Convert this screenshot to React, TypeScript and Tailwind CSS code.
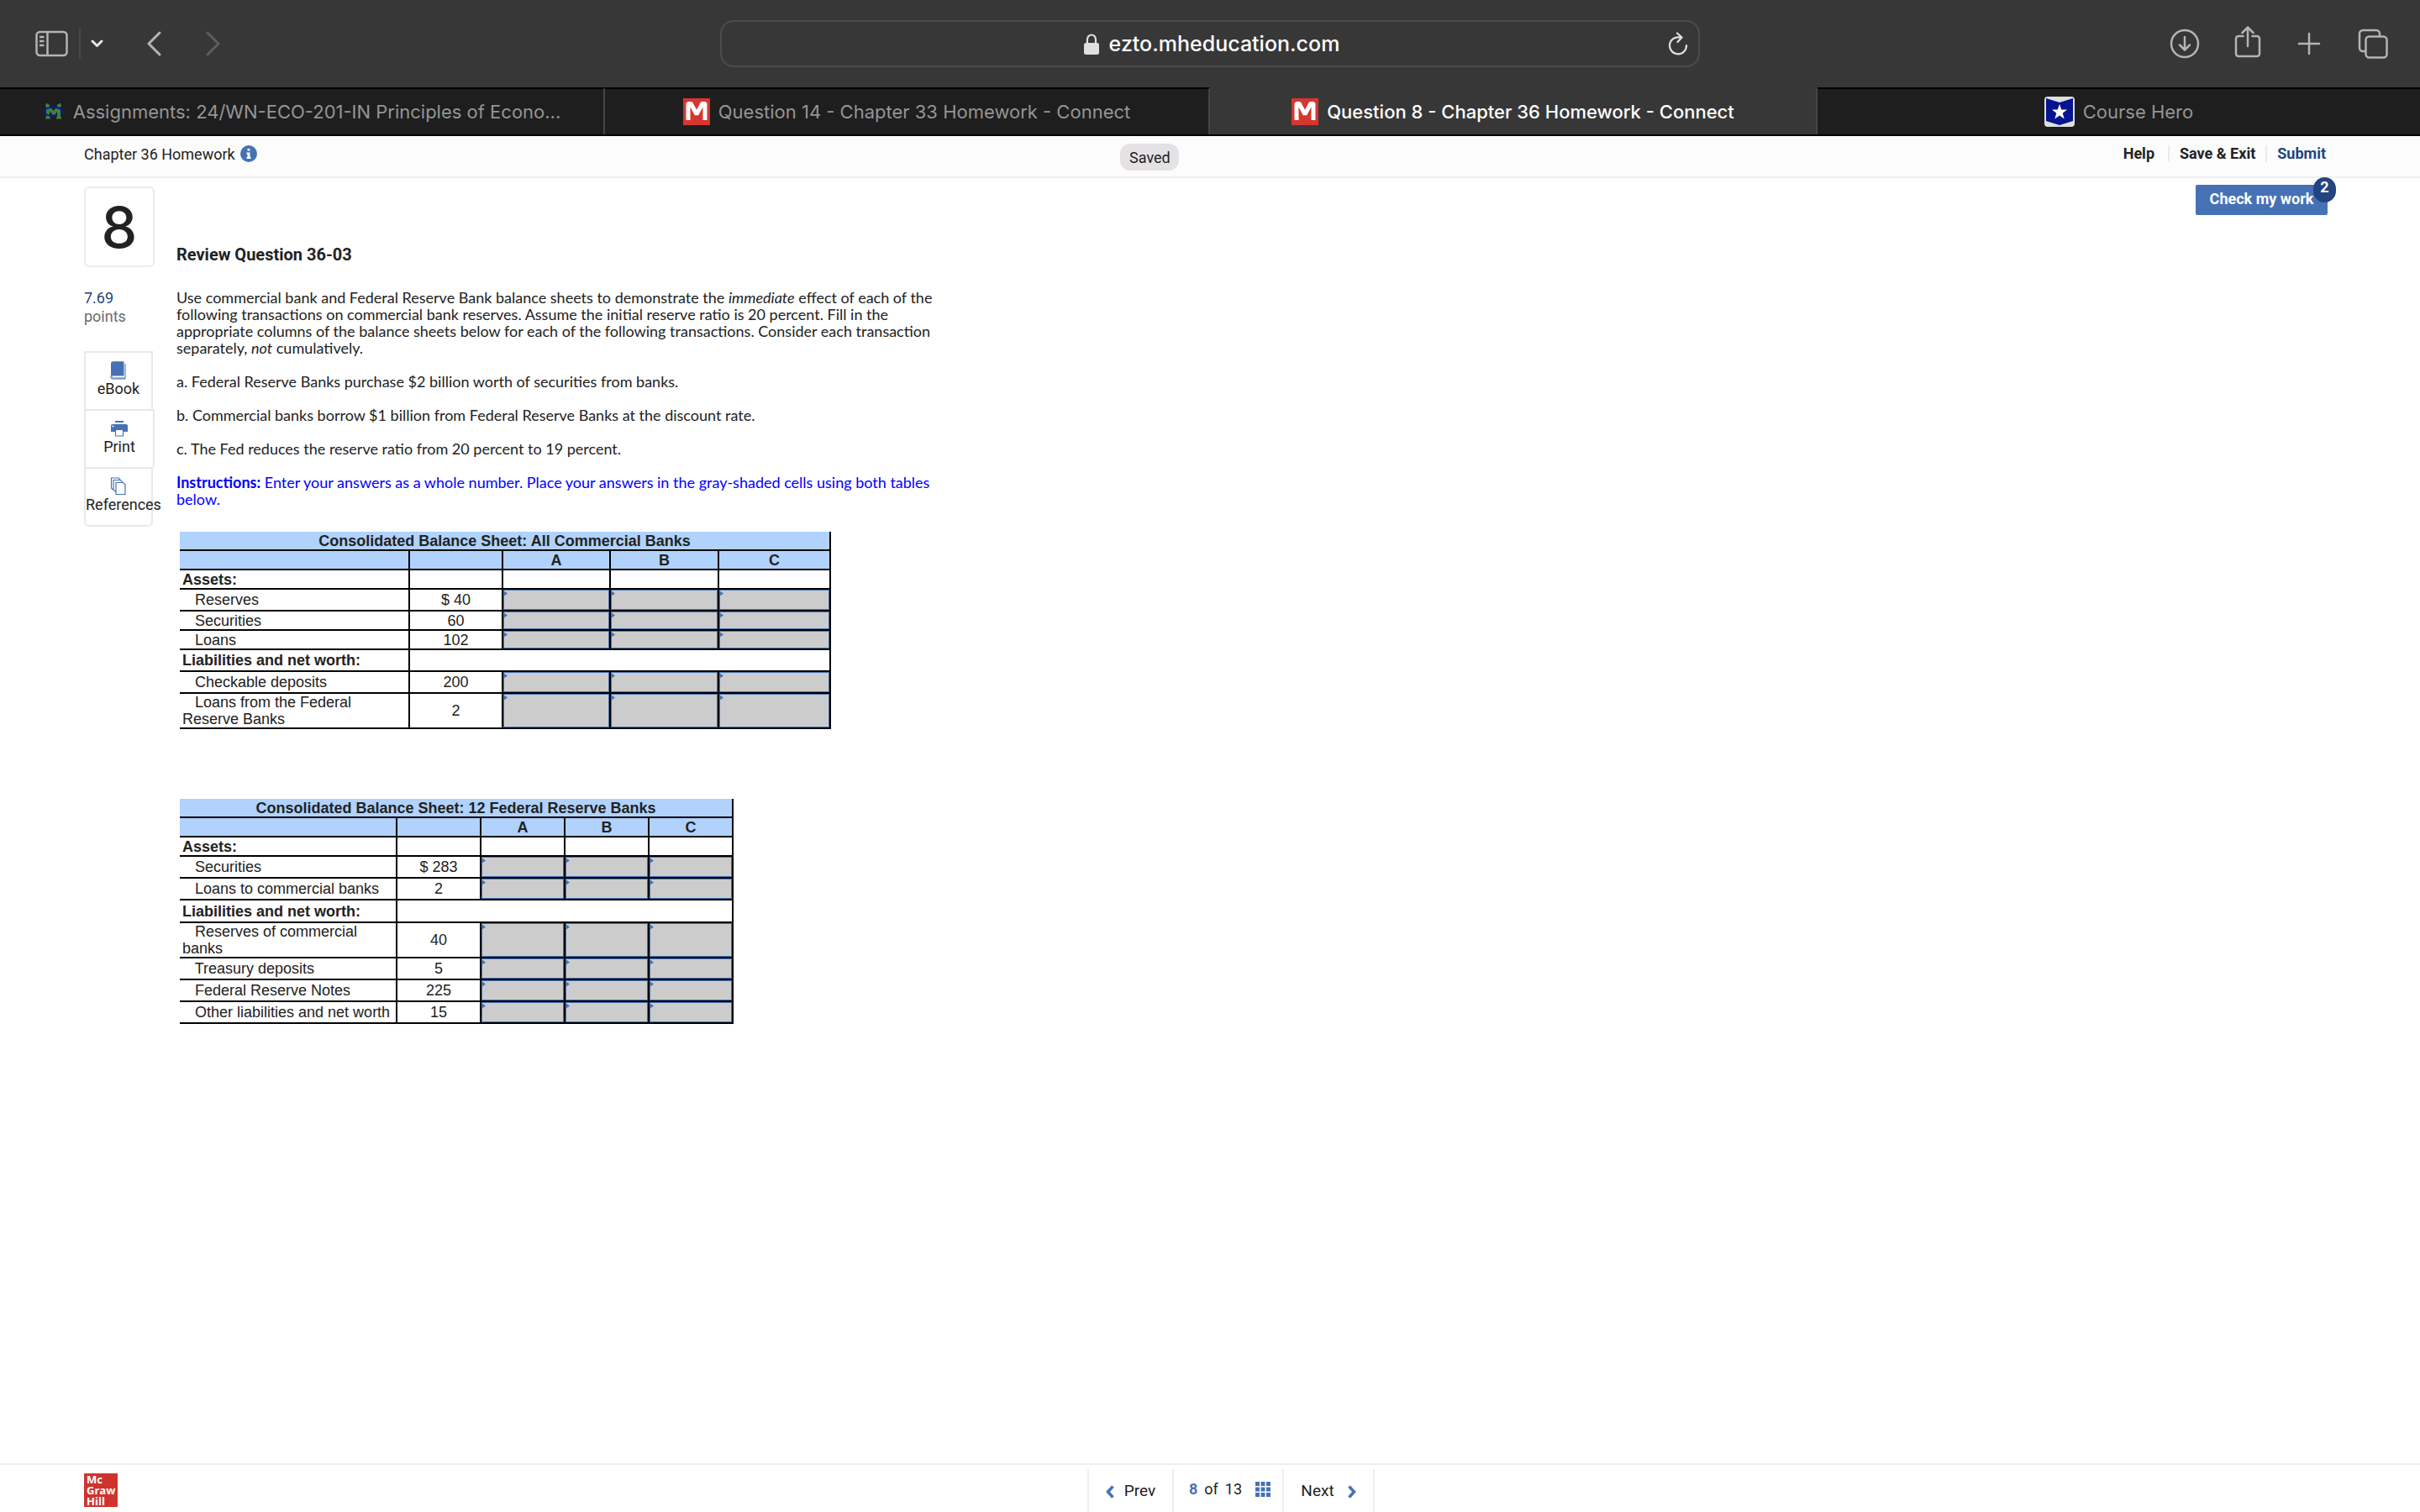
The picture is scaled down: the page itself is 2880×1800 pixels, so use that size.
import { ReactNode } from "react"

type Row = {
    label:string;
    value?:string;
    kind:"section" | "span" | "entry";
    height:string;
}

type Sheet = {
    title:string;
    widths:string[];
    rows:Row[];
}

const commercialBanks:Sheet = {
    title:"Consolidated Balance Sheet: All Commercial Banks",
    widths:["w-[274px]","w-[111px]","w-[128px]","w-[129px]","w-[133px]"],
    rows:[
        { label:"Assets:", kind:"section", height:"h-[23px]" },
        { label:"Reserves", value:"$ 40", kind:"entry", height:"h-[26px]" },
        { label:"Securities", value:"60", kind:"entry", height:"h-[23px]" },
        { label:"Loans", value:"102", kind:"entry", height:"h-[23px]" },
        { label:"Liabilities and net worth:", kind:"span", height:"h-[26px]" },
        { label:"Checkable deposits", value:"200", kind:"entry", height:"h-[26px]" },
        { label:"Loans from the Federal Reserve Banks", value:"2", kind:"entry", height:"h-[42px]" },
    ],
}

const reserveBanks:Sheet = {
    title:"Consolidated Balance Sheet: 12 Federal Reserve Banks",
    widths:["w-[259px]","w-[100px]","w-[100px]","w-[100px]","w-[100px]"],
    rows:[
        { label:"Assets:", kind:"section", height:"h-[23px]" },
        { label:"Securities", value:"$ 283", kind:"entry", height:"h-[26px]" },
        { label:"Loans to commercial banks", value:"2", kind:"entry", height:"h-[26px]" },
        { label:"Liabilities and net worth:", kind:"span", height:"h-[27px]" },
        { label:"Reserves of commercial banks", value:"40", kind:"entry", height:"h-[42px]" },
        { label:"Treasury deposits", value:"5", kind:"entry", height:"h-[26px]" },
        { label:"Federal Reserve Notes", value:"225", kind:"entry", height:"h-[26px]" },
        { label:"Other liabilities and net worth", value:"15", kind:"entry", height:"h-[26px]" },
    ],
}

const columns:string[] = ["A","B","C"];

const cell = "border-b-2 border-r-2 border-black";

const AnswerCell = ({ name, height }:{ name:string, height:string }) => (
    <td className={`relative p-0 ${cell} ${height}`}>
        <input
            type="text"
            aria-label={name}
            className="block h-full w-full border border-[#4672b5] bg-[#cccccc] px-1 text-center text-sm leading-4 outline-none"
        />
        <svg className="pointer-events-none absolute top-0 left-0" width="5" height="8" viewBox="0 0 5 8">
            <path d="M0 1L5 4.5L0 8Z" fill="#4672b5" />
        </svg>
    </td>
)

const BalanceSheet = ({ sheet }:{ sheet:Sheet }) => (
    <table className="ml-1 table-fixed border-separate border-spacing-0 font-['Liberation_Sans',Arial,sans-serif] text-[18px] leading-5">
        <colgroup>
            {sheet.widths.map((width,index)=>(
                <col key={index} className={width} />
            ))}
        </colgroup>
        <thead className="bg-[#b0d2fc]">
            <tr>
                <th colSpan={5} className={`h-[23px] p-0 ${cell}`}>{sheet.title}</th>
            </tr>
            <tr>
                <td className={`h-[23px] p-0 ${cell}`}></td>
                <td className={`p-0 ${cell}`}></td>
                {columns.map((column)=>(
                    <th key={column} scope="col" className={`p-0 ${cell}`}>{column}</th>
                ))}
            </tr>
        </thead>
        <tbody>
            {sheet.rows.map((row)=>(
                <tr key={row.label}>
                    <th
                        scope="row"
                        className={`py-0 pr-0 pl-[3px] text-left ${cell} ${row.height} ` + (row.kind === "entry" ? "font-normal" : "font-bold")}
                    >
                        {row.kind === "entry" ? "\u00a0\u00a0 " : ""}{row.label}
                    </th>
                    {row.kind === "span" && <td colSpan={4} className={`p-0 ${cell}`}></td>}
                    {row.kind !== "span" && <td className={`p-0 text-center ${cell}`}>{row.value}</td>}
                    {row.kind === "section" && columns.map((column)=>(
                        <td key={column} className={`p-0 ${cell}`}></td>
                    ))}
                    {row.kind === "entry" && columns.map((column)=>(
                        <AnswerCell key={column} name={`${row.label} ${column}`} height={row.height} />
                    ))}
                </tr>
            ))}
        </tbody>
    </table>
)

const RedMark = () => (
    <span className="flex size-8 shrink-0 items-center justify-center bg-[#d6362f]">
        <svg width="26" height="24" viewBox="0 0 26 24" aria-hidden="true">
            <path d="M3 22V2H6L13 15L20 2H23V22" fill="none" stroke="#fff" strokeWidth="5" strokeLinejoin="bevel" />
        </svg>
    </span>
)

const CollegeMark = () => (
    <svg width="26" height="20" viewBox="0 0 26 20" className="shrink-0" aria-hidden="true">
        <path d="M6 17V4L13 12L19 4V17" fill="none" stroke="#35863f" strokeWidth="4" />
        <path d="M3 2.500H8M17 2.500H22M3 17.500H9M16 17.500H22" stroke="#35863f" strokeWidth="2" />
        <path d="M21 6C14 3 2 5 1.500 10C1.500 15 14 16 17 13M16 5C21 6 25 9 24 13" fill="none" stroke="#1d1490" strokeWidth="2" />
    </svg>
)

const HeroMark = () => (
    <svg width="36" height="36" viewBox="0 0 36 36" className="shrink-0" aria-hidden="true">
        <rect width="36" height="36" rx="4" fill="#dedede" />
        <path d="M2 2L18 7L34 2V29L18 34L2 29Z" fill="#06148f" />
        <path d="M18 9L20.3 15.6H27L21.7 19.8L23.7 26.5L18 22.5L12.3 26.5L14.3 19.8L9 15.6H15.7Z" fill="#fff" />
    </svg>
)

const tabs:{ title:string, icon:ReactNode, active?:boolean }[] = [
    { title:"Assignments: 24/WN-ECO-201-IN Principles of Econo...", icon:<CollegeMark /> },
    { title:"Question 14 - Chapter 33 Homework - Connect", icon:<RedMark /> },
    { title:"Question 8 - Chapter 36 Homework - Connect", icon:<RedMark />, active:true },
    { title:"Course Hero", icon:<HeroMark /> },
];

const BrowserBar = () => (
    <div className="bg-[#373737] font-[Inter,sans-serif]">
        <div className="grid h-[104px] grid-cols-[25fr_34fr_25fr] items-center text-[#b4b4b4]">
            <div className="flex items-center pl-[42px]">
                <button aria-label="Sidebar">
                    <svg width="39" height="32" viewBox="0 0 39 32" fill="none" stroke="currentColor" strokeWidth="2.5">
                        <rect x="1.5" y="2" width="36" height="28" rx="4" />
                        <path d="M14.5 2V30M5 8H10.500M5 13H10.500M5 18H10.500" />
                    </svg>
                </button>
                <span className="ml-[13px] h-9 w-[2px] bg-[#4a4a4a]" />
                <button aria-label="Tab groups" className="ml-3 text-[#e6e6e6]">
                    <svg width="15" height="10" viewBox="0 0 15 10" fill="none" stroke="currentColor" strokeWidth="3" strokeLinecap="round" strokeLinejoin="round">
                        <path d="M2 2L7.500 7.500L13 2" />
                    </svg>
                </button>
                <button aria-label="Back" className="ml-[51px]">
                    <svg width="18" height="30" viewBox="0 0 18 30" fill="none" stroke="currentColor" strokeWidth="3" strokeLinecap="round" strokeLinejoin="round">
                        <path d="M16 2L3 15L16 28" />
                    </svg>
                </button>
                <button aria-label="Forward" className="ml-[53px] text-[#5e5e5e]">
                    <svg width="18" height="30" viewBox="0 0 18 30" fill="none" stroke="currentColor" strokeWidth="3" strokeLinecap="round" strokeLinejoin="round">
                        <path d="M2 2L15 15L2 28" />
                    </svg>
                </button>
            </div>
            <div className="flex h-14 items-center rounded-2xl border-2 border-[#4c4c4c] px-3 text-[#e0e0e0]">
                <label className="ml-7 flex flex-1 items-center justify-center gap-3 pt-[2px]">
                    <svg width="18" height="26" viewBox="0 0 18 26" aria-hidden="true">
                        <rect y="11" width="18" height="14" rx="2.500" fill="currentColor" />
                        <path d="M4 12V7A5 5.500 0 0 1 14 7V12" fill="none" stroke="currentColor" strokeWidth="2.200" />
                    </svg>
                    <input
                        aria-label="Address"
                        defaultValue="ezto.mheducation.com"
                        className="field-sizing-content text-[25px] font-medium text-white outline-none"
                    />
                </label>
                <button aria-label="Reload">
                    <svg width="24" height="28" viewBox="0 0 24 28" fill="none" stroke="currentColor" strokeWidth="2.200" strokeLinecap="round" strokeLinejoin="round">
                        <path d="M14 6.500A10 10 0 1 0 22 16M11 1.500L16.500 6.500L11.500 12" />
                    </svg>
                </button>
            </div>
            <div className="flex items-center justify-end pr-[38px]">
                <button aria-label="Downloads">
                    <svg width="36" height="36" viewBox="0 0 36 36" fill="none" stroke="currentColor" strokeWidth="2.500" strokeLinecap="round" strokeLinejoin="round">
                        <path d="M18 10V25M12 19.500L18 25.500L24 19.500" />
                        <circle cx="18" cy="18" r="16" />
                    </svg>
                </button>
                <button aria-label="Share" className="mb-1 ml-[41px]">
                    <svg width="32" height="38" viewBox="0 0 32 38" fill="none" stroke="currentColor" strokeWidth="2.500" strokeLinecap="round" strokeLinejoin="round">
                        <path d="M10.500 12H5A3 3 0 0 0 2 15V33A3 3 0 0 0 5 36H27A3 3 0 0 0 30 33V15A3 3 0 0 0 27 12H21.500M16 24V2M9.500 8L16 1.500L22.500 8" />
                    </svg>
                </button>
                <button aria-label="New tab" className="ml-[43px]">
                    <svg width="28" height="28" viewBox="0 0 28 28" fill="none" stroke="currentColor" strokeWidth="2.500" strokeLinecap="round">
                        <path d="M14 2V26M2 14H26" />
                    </svg>
                </button>
                <button aria-label="Show tabs" className="ml-11">
                    <svg width="36" height="36" viewBox="0 0 36 36" fill="none" stroke="currentColor" strokeWidth="2.500">
                        <path d="M9 27H6A4 4 0 0 1 2 23V6A4 4 0 0 1 6 2H22A4 4 0 0 1 26 6V9" />
                        <rect x="9.500" y="9.500" width="25" height="25" rx="4" />
                    </svg>
                </button>
            </div>
        </div>
        <nav className="grid h-[58px] grid-cols-[240fr_240fr_241fr_239fr] border-b-2 border-black">
            {tabs.map((tab)=>(
                <a
                    key={tab.title}
                    href="#"
                    className={
                        "flex items-center justify-center gap-[10px] border-t-2 border-r-2 border-r-[#454545] text-[22px] last:border-r-0 " +
                        (tab.active ? "border-t-[#373737] font-medium text-white" : "border-t-black bg-[#1e1e1e] text-[#959595]")
                    }
                >
                    {tab.icon}
                    {tab.title}
                </a>
            ))}
        </nav>
    </div>
)

const tools:{ label:string, icon:ReactNode, box:string }[] = [
    {
        label:"eBook",
        icon:(
            <svg width="20" height="22" viewBox="0 0 20 22">
                <path d="M3 1H16V17H3.500A1.500 1.500 0 0 0 3.500 20H18V3" fill="none" stroke="#4672b5" strokeWidth="1" />
                <path d="M3 .5H16V17H1V2.500A2 2 0 0 1 3 .5Z" fill="#4672b5" />
                <path d="M1 17V19A2 2 0 0 0 3 21H18.500" fill="none" stroke="#4672b5" strokeWidth="1" />
            </svg>
        ),
        box:"w-[82px] h-[69px] border-b-0",
    },
    {
        label:"Print",
        icon:(
            <svg width="20" height="22" viewBox="0 0 20 22">
                <path d="M5 2H15V4H5ZM2 6H18A2 2 0 0 1 20 8V15H0V8A2 2 0 0 1 2 6Z" fill="#4672b5" />
                <path d="M5.500 12.500H14.500V20H5.500Z" fill="#fff" stroke="#4672b5" strokeWidth="1.200" />
                <circle cx="2.500" cy="8.500" r="1" fill="#fff" />
            </svg>
        ),
        box:"w-[84px] h-[69px] border-b-0",
    },
    {
        label:"References",
        icon:(
            <svg width="20" height="22" viewBox="0 0 20 22" fill="#fff" stroke="#4672b5" strokeWidth="1.200">
                <path d="M1.500 1H10L12 3V15H3.500L1.500 13Z" />
                <path d="M4 3.500H12L14.500 5.500V17H6L4 15Z" />
                <path d="M7 6.500H15.500L18 9V20.500H7Z" />
            </svg>
        ),
        box:"w-[82px] h-[71px] rounded-b-md",
    },
];

const Sidebar = () => (
    <aside className="mt-[2px] w-[84px] shrink-0">
        <div className="flex h-24 items-center justify-center rounded-md border-2 border-[#ebebeb] font-[Inter,sans-serif] text-[68px] font-medium">8</div>
        <div className="mt-[26px] leading-[22px]">
            <div className="text-[#224480]">7.69</div>
            <div className="text-[#6b6b6b]">points</div>
        </div>
        <div className="mt-[30px]">
            {tools.map((tool)=>(
                <button
                    key={tool.label}
                    className={`flex flex-col items-center border-2 border-[#e8e8e8] pt-[10px] leading-[22px] ${tool.box}`}
                >
                    {tool.icon}
                    <span className="w-full text-center">{tool.label}</span>
                </button>
            ))}
        </div>
    </aside>
)

const Question = () => (
    <section>
        <h1 className="mt-[71px] text-[20px] leading-6 font-bold">Review Question 36-03</h1>
        <div className="mt-[29px] mb-[29px] flex flex-col gap-5 font-[Lato,sans-serif] leading-5">
            <p>
                Use commercial bank and Federal Reserve Bank balance sheets to demonstrate the <em>immediate</em> effect of each of the<br />
                following transactions on commercial bank reserves. Assume the initial reserve ratio is 20 percent. Fill in the<br />
                appropriate columns of the balance sheets below for each of the following transactions. Consider each transaction<br />
                separately, <em>not</em> cumulatively.
            </p>
            <p>a. Federal Reserve Banks purchase $2 billion worth of securities from banks.</p>
            <p>b. Commercial banks borrow $1 billion from Federal Reserve Banks at the discount rate.</p>
            <p>c. The Fed reduces the reserve ratio from 20 percent to 19 percent.</p>
            <p className="text-[#0000ff]">
                <strong>Instructions:</strong> Enter your answers as a whole number. Place your answers in the gray-shaded cells using both tables<br />
                below.
            </p>
        </div>
        <BalanceSheet sheet={commercialBanks} />
        <div className="h-[83px]" />
        <BalanceSheet sheet={reserveBanks} />
    </section>
)

const Footer = () => (
    <footer className="flex h-[58px] border-t-2 border-[#efefef] text-[19px]">
        <div className="w-[44.93%] pt-[10px] pl-[100px]">
            <div className="flex size-10 flex-col justify-center bg-[#d0332e] pl-[3px] font-['Open_Sans',sans-serif] text-[13px] leading-[13px] font-bold text-white">
                <span>Mc</span>
                <span>Graw</span>
                <span>Hill</span>
            </div>
        </div>
        <nav className="mt-[5px] flex border-r-2 border-[#efefef]">
            <button className="flex w-[101px] items-center justify-center gap-3 border-l-2 border-[#efefef] pt-[2px]">
                <svg width="10" height="16" viewBox="0 0 10 16" fill="none" stroke="#4672b5" strokeWidth="3.500">
                    <path d="M8.500 1.500L2.500 8L8.500 14.500" />
                </svg>
                Prev
            </button>
            <div className="flex w-[131px] items-center justify-center gap-4 border-l-2 border-[#efefef] pb-1 pl-1">
                <span className="flex gap-2 text-[18px]">
                    <b className="text-[#4672b5]">8</b>
                    <span>of</span>
                    <span>13</span>
                </span>
                <button aria-label="Question list">
                    <svg width="18" height="18" viewBox="0 0 18 18" fill="#4672b5">
                        <path d="M0 0H5V5H0ZM6.500 0H11.500V5H6.500ZM13 0H18V5H13ZM0 6.500H5V11.500H0ZM6.500 6.500H11.500V11.500H6.500ZM13 6.500H18V11.500H13ZM0 13H5V18H0ZM6.500 13H11.500V18H6.500ZM13 13H18V18H13Z" />
                    </svg>
                </button>
            </div>
            <button className="flex w-[108px] items-center justify-center gap-4 border-l-2 border-[#efefef] pt-[2px]">
                Next
                <svg width="10" height="16" viewBox="0 0 10 16" fill="none" stroke="#4672b5" strokeWidth="3.500">
                    <path d="M1.500 1.500L7.500 8L1.500 14.500" />
                </svg>
            </button>
        </nav>
    </footer>
)

export const App = () => {
    return (
        <div className="flex min-h-screen flex-col bg-white font-[Roboto,sans-serif] text-[18px] text-[#222222]">
            <BrowserBar />
            <header className="flex h-[50px] items-center border-b-2 border-[#efefef] bg-[#fcfcfc] pb-[6px]">
                <div className="flex w-[46.3%] items-center gap-[6px] pl-[100px]">
                    Chapter 36 Homework
                    <button aria-label="Assignment information">
                        <svg width="20" height="20" viewBox="0 0 20 20">
                            <circle cx="10" cy="10" r="10" fill="#4672b5" />
                            <path d="M8.500 4H11.500V6.500H8.500ZM7.500 8.500H11.500V14H12.500V16H7.500V14H8.500V10.500H7.500Z" fill="#fff" />
                        </svg>
                    </button>
                </div>
                <div className="mt-2 flex h-8 w-[70px] items-center justify-center rounded-xl bg-[#e4e2e5]">Saved</div>
                <nav className="ml-auto flex items-center pr-28 leading-5 font-bold">
                    <a href="#" className="pr-4">Help</a>
                    <a href="#" className="border-x-2 border-[#ebebeb] px-3">Save &amp; Exit</a>
                    <a href="#" className="pl-3 text-[#224480]">Submit</a>
                </nav>
            </header>
            <main className="flex flex-1 items-start gap-[26px] pt-2 pr-[110px] pl-[100px]">
                <Sidebar />
                <Question />
                <button className="relative ml-auto h-9 w-[157px] rounded-xs bg-[#4672b5] pb-1 font-bold text-white">
                    Check my work
                    <span className="absolute -top-[9px] -right-[10px] flex h-[30px] w-[27px] justify-center rounded-full bg-[#224480] leading-6">2</span>
                </button>
            </main>
            <Footer />
        </div>
    )
}

export default App
